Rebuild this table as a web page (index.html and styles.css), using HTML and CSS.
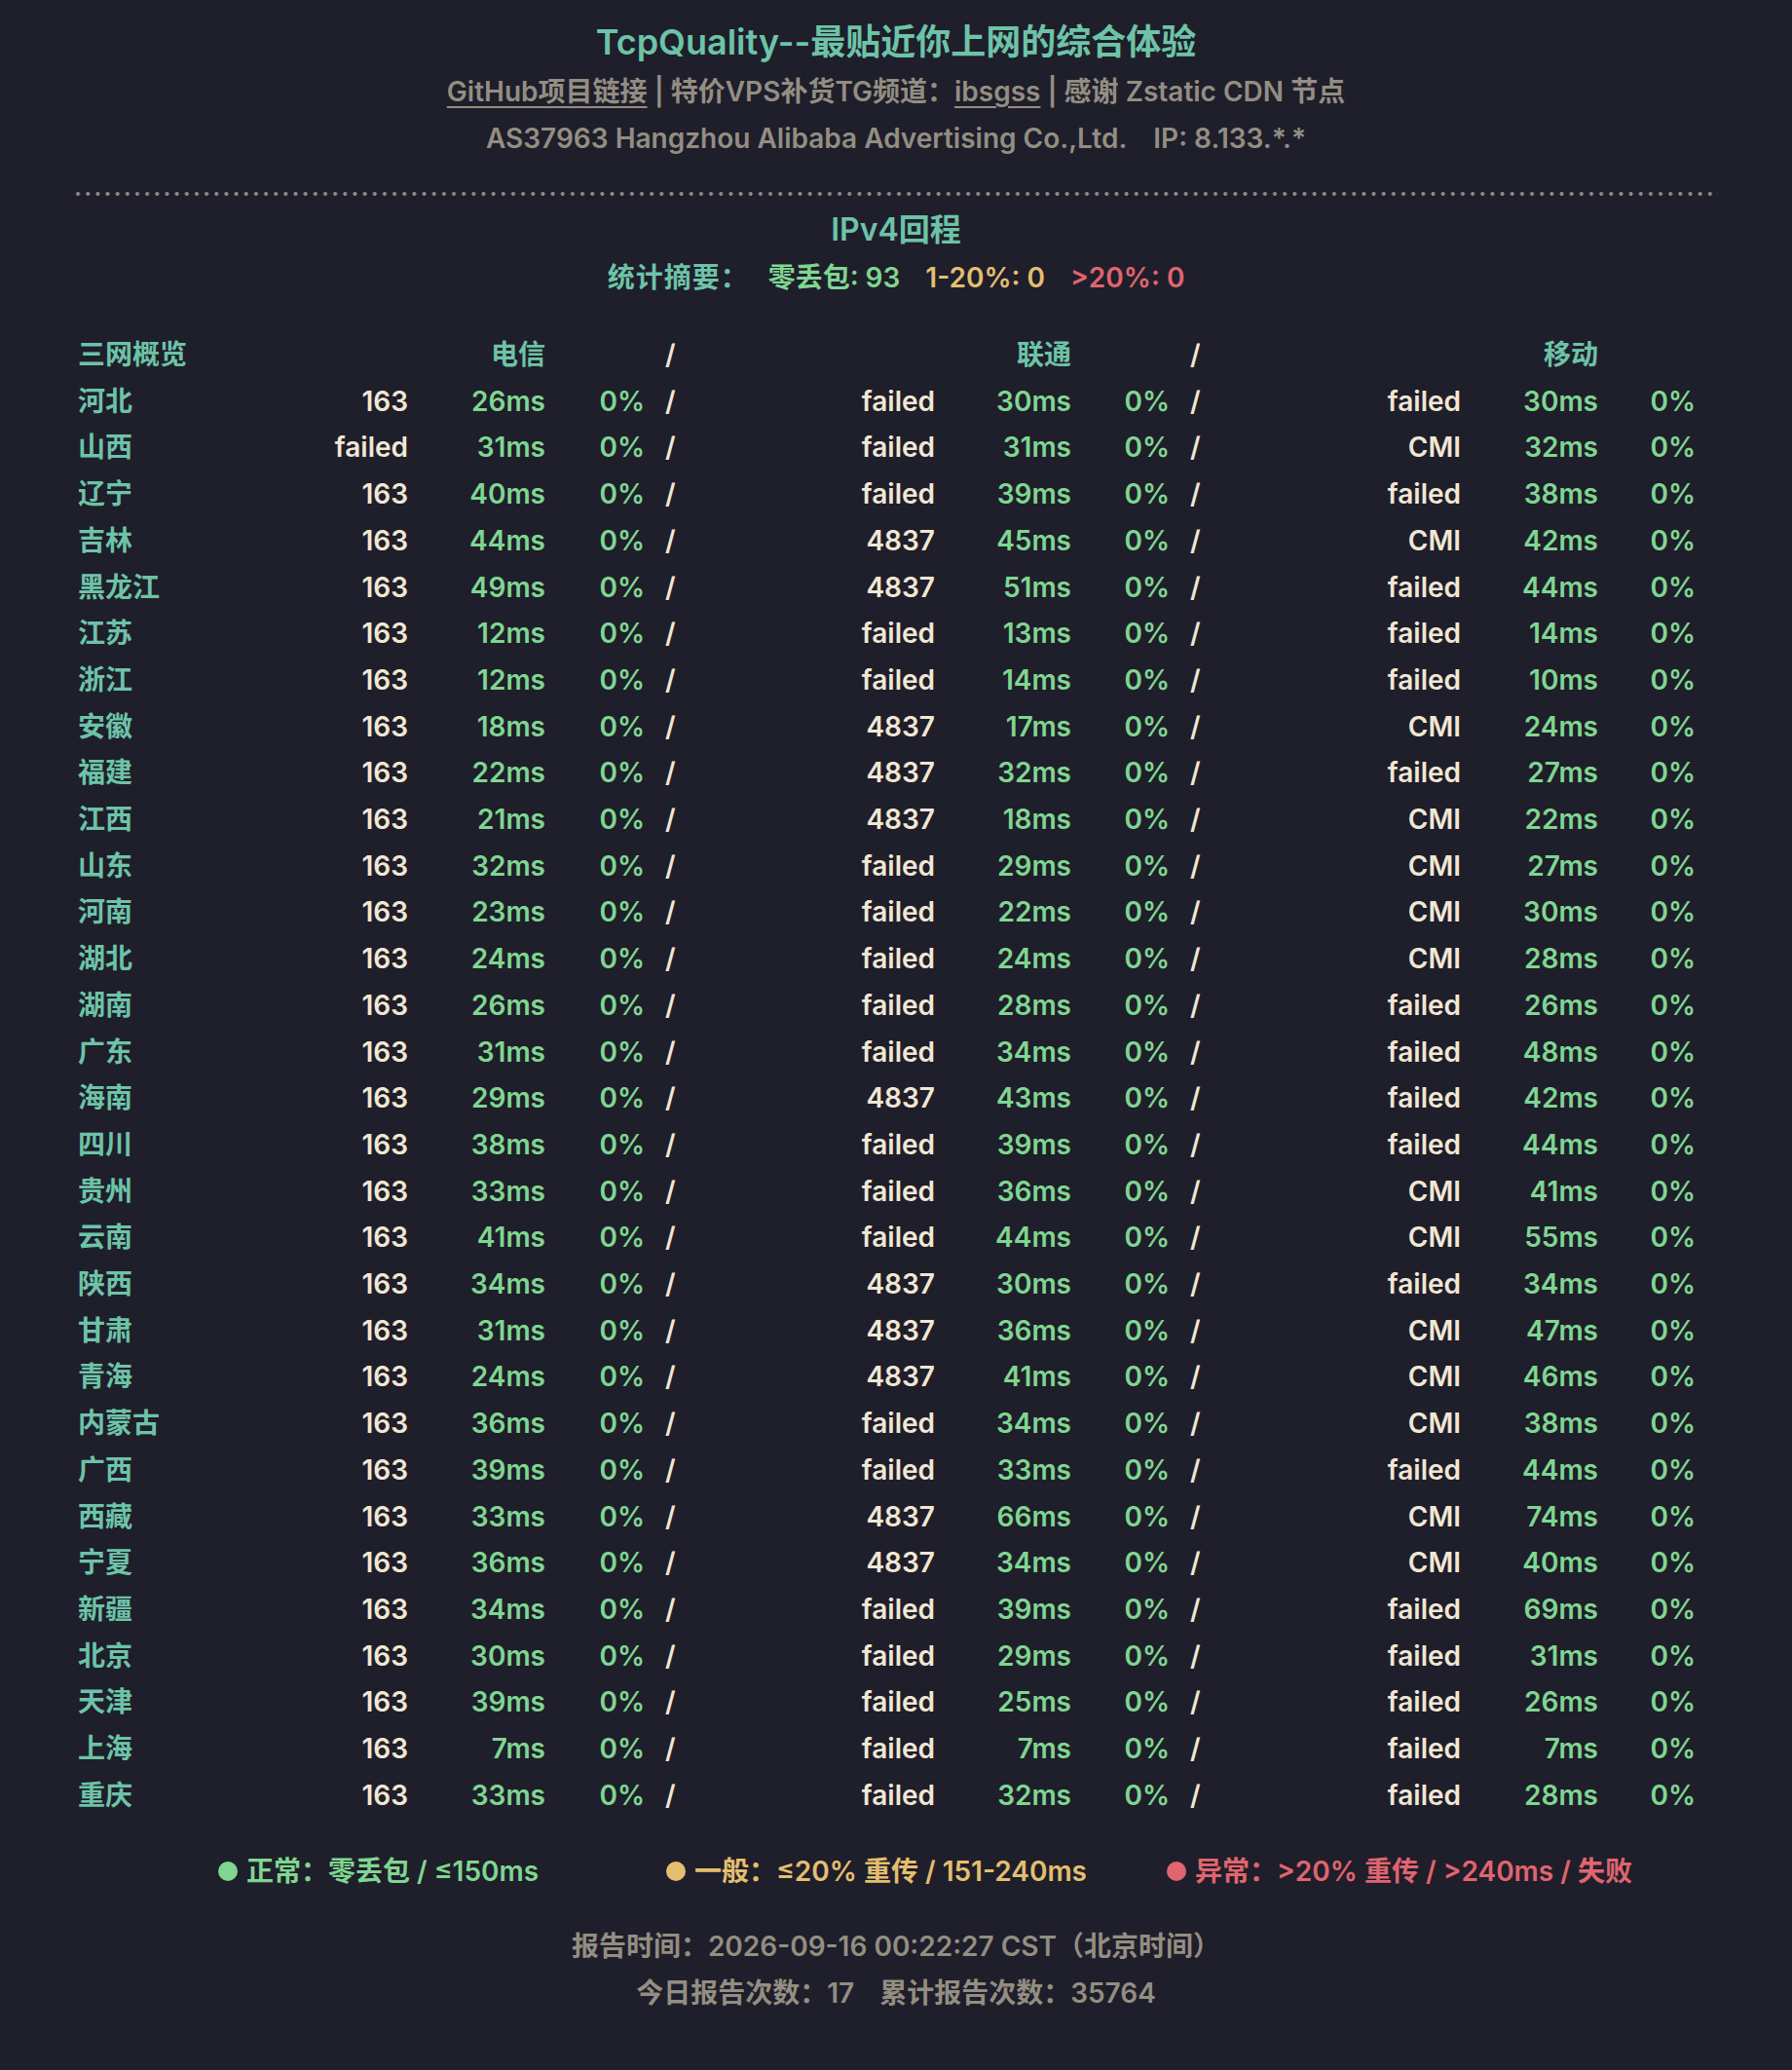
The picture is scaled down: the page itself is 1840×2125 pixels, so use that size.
FILE: index.html
```html
<!DOCTYPE html>
<html lang="zh-CN">
<head>
<meta charset="utf-8">
<title>TcpQuality</title>
<link rel="stylesheet" href="styles.css">
</head>
<body>
<div class="page">
  <header class="head">
    <div class="title">TcpQuality--最贴近你上网的综合体验</div>
    <div class="sub"><a href="#">GitHub项目链接</a> | 特价VPS补货TG频道：<a href="#">ibsgss</a> | 感谢 Zstatic CDN 节点</div>
    <div class="sub">AS37963 Hangzhou Alibaba Advertising Co.,Ltd.<span class="ip">IP: 8.133.*.*</span></div>
  </header>
  <div class="dots"></div>
  <div class="sec">IPv4回程</div>
  <div class="summary">
    <span class="teal">统计摘要：</span>
    <span class="green">零丢包: 93</span>
    <span class="yellow">1-20%: 0</span>
    <span class="red">&gt;20%: 0</span>
  </div>
  <div class="table">
    <div class="row hdr"><span class="n">三网概览</span><span></span><span class="h">电信</span><span></span><span class="s">/</span><span></span><span class="h">联通</span><span></span><span class="s">/</span><span></span><span class="h">移动</span><span></span></div>
    <div class="row"><span class="n">河北</span><span class="a">163</span><span class="g">26ms</span><span class="g">0%</span><span class="s">/</span><span class="a">failed</span><span class="g">30ms</span><span class="g">0%</span><span class="s">/</span><span class="a">failed</span><span class="g">30ms</span><span class="g">0%</span></div>
    <div class="row"><span class="n">山西</span><span class="a">failed</span><span class="g">31ms</span><span class="g">0%</span><span class="s">/</span><span class="a">failed</span><span class="g">31ms</span><span class="g">0%</span><span class="s">/</span><span class="a">CMI</span><span class="g">32ms</span><span class="g">0%</span></div>
    <div class="row"><span class="n">辽宁</span><span class="a">163</span><span class="g">40ms</span><span class="g">0%</span><span class="s">/</span><span class="a">failed</span><span class="g">39ms</span><span class="g">0%</span><span class="s">/</span><span class="a">failed</span><span class="g">38ms</span><span class="g">0%</span></div>
    <div class="row"><span class="n">吉林</span><span class="a">163</span><span class="g">44ms</span><span class="g">0%</span><span class="s">/</span><span class="a">4837</span><span class="g">45ms</span><span class="g">0%</span><span class="s">/</span><span class="a">CMI</span><span class="g">42ms</span><span class="g">0%</span></div>
    <div class="row"><span class="n">黑龙江</span><span class="a">163</span><span class="g">49ms</span><span class="g">0%</span><span class="s">/</span><span class="a">4837</span><span class="g">51ms</span><span class="g">0%</span><span class="s">/</span><span class="a">failed</span><span class="g">44ms</span><span class="g">0%</span></div>
    <div class="row"><span class="n">江苏</span><span class="a">163</span><span class="g">12ms</span><span class="g">0%</span><span class="s">/</span><span class="a">failed</span><span class="g">13ms</span><span class="g">0%</span><span class="s">/</span><span class="a">failed</span><span class="g">14ms</span><span class="g">0%</span></div>
    <div class="row"><span class="n">浙江</span><span class="a">163</span><span class="g">12ms</span><span class="g">0%</span><span class="s">/</span><span class="a">failed</span><span class="g">14ms</span><span class="g">0%</span><span class="s">/</span><span class="a">failed</span><span class="g">10ms</span><span class="g">0%</span></div>
    <div class="row"><span class="n">安徽</span><span class="a">163</span><span class="g">18ms</span><span class="g">0%</span><span class="s">/</span><span class="a">4837</span><span class="g">17ms</span><span class="g">0%</span><span class="s">/</span><span class="a">CMI</span><span class="g">24ms</span><span class="g">0%</span></div>
    <div class="row"><span class="n">福建</span><span class="a">163</span><span class="g">22ms</span><span class="g">0%</span><span class="s">/</span><span class="a">4837</span><span class="g">32ms</span><span class="g">0%</span><span class="s">/</span><span class="a">failed</span><span class="g">27ms</span><span class="g">0%</span></div>
    <div class="row"><span class="n">江西</span><span class="a">163</span><span class="g">21ms</span><span class="g">0%</span><span class="s">/</span><span class="a">4837</span><span class="g">18ms</span><span class="g">0%</span><span class="s">/</span><span class="a">CMI</span><span class="g">22ms</span><span class="g">0%</span></div>
    <div class="row"><span class="n">山东</span><span class="a">163</span><span class="g">32ms</span><span class="g">0%</span><span class="s">/</span><span class="a">failed</span><span class="g">29ms</span><span class="g">0%</span><span class="s">/</span><span class="a">CMI</span><span class="g">27ms</span><span class="g">0%</span></div>
    <div class="row"><span class="n">河南</span><span class="a">163</span><span class="g">23ms</span><span class="g">0%</span><span class="s">/</span><span class="a">failed</span><span class="g">22ms</span><span class="g">0%</span><span class="s">/</span><span class="a">CMI</span><span class="g">30ms</span><span class="g">0%</span></div>
    <div class="row"><span class="n">湖北</span><span class="a">163</span><span class="g">24ms</span><span class="g">0%</span><span class="s">/</span><span class="a">failed</span><span class="g">24ms</span><span class="g">0%</span><span class="s">/</span><span class="a">CMI</span><span class="g">28ms</span><span class="g">0%</span></div>
    <div class="row"><span class="n">湖南</span><span class="a">163</span><span class="g">26ms</span><span class="g">0%</span><span class="s">/</span><span class="a">failed</span><span class="g">28ms</span><span class="g">0%</span><span class="s">/</span><span class="a">failed</span><span class="g">26ms</span><span class="g">0%</span></div>
    <div class="row"><span class="n">广东</span><span class="a">163</span><span class="g">31ms</span><span class="g">0%</span><span class="s">/</span><span class="a">failed</span><span class="g">34ms</span><span class="g">0%</span><span class="s">/</span><span class="a">failed</span><span class="g">48ms</span><span class="g">0%</span></div>
    <div class="row"><span class="n">海南</span><span class="a">163</span><span class="g">29ms</span><span class="g">0%</span><span class="s">/</span><span class="a">4837</span><span class="g">43ms</span><span class="g">0%</span><span class="s">/</span><span class="a">failed</span><span class="g">42ms</span><span class="g">0%</span></div>
    <div class="row"><span class="n">四川</span><span class="a">163</span><span class="g">38ms</span><span class="g">0%</span><span class="s">/</span><span class="a">failed</span><span class="g">39ms</span><span class="g">0%</span><span class="s">/</span><span class="a">failed</span><span class="g">44ms</span><span class="g">0%</span></div>
    <div class="row"><span class="n">贵州</span><span class="a">163</span><span class="g">33ms</span><span class="g">0%</span><span class="s">/</span><span class="a">failed</span><span class="g">36ms</span><span class="g">0%</span><span class="s">/</span><span class="a">CMI</span><span class="g">41ms</span><span class="g">0%</span></div>
    <div class="row"><span class="n">云南</span><span class="a">163</span><span class="g">41ms</span><span class="g">0%</span><span class="s">/</span><span class="a">failed</span><span class="g">44ms</span><span class="g">0%</span><span class="s">/</span><span class="a">CMI</span><span class="g">55ms</span><span class="g">0%</span></div>
    <div class="row"><span class="n">陕西</span><span class="a">163</span><span class="g">34ms</span><span class="g">0%</span><span class="s">/</span><span class="a">4837</span><span class="g">30ms</span><span class="g">0%</span><span class="s">/</span><span class="a">failed</span><span class="g">34ms</span><span class="g">0%</span></div>
    <div class="row"><span class="n">甘肃</span><span class="a">163</span><span class="g">31ms</span><span class="g">0%</span><span class="s">/</span><span class="a">4837</span><span class="g">36ms</span><span class="g">0%</span><span class="s">/</span><span class="a">CMI</span><span class="g">47ms</span><span class="g">0%</span></div>
    <div class="row"><span class="n">青海</span><span class="a">163</span><span class="g">24ms</span><span class="g">0%</span><span class="s">/</span><span class="a">4837</span><span class="g">41ms</span><span class="g">0%</span><span class="s">/</span><span class="a">CMI</span><span class="g">46ms</span><span class="g">0%</span></div>
    <div class="row"><span class="n">内蒙古</span><span class="a">163</span><span class="g">36ms</span><span class="g">0%</span><span class="s">/</span><span class="a">failed</span><span class="g">34ms</span><span class="g">0%</span><span class="s">/</span><span class="a">CMI</span><span class="g">38ms</span><span class="g">0%</span></div>
    <div class="row"><span class="n">广西</span><span class="a">163</span><span class="g">39ms</span><span class="g">0%</span><span class="s">/</span><span class="a">failed</span><span class="g">33ms</span><span class="g">0%</span><span class="s">/</span><span class="a">failed</span><span class="g">44ms</span><span class="g">0%</span></div>
    <div class="row"><span class="n">西藏</span><span class="a">163</span><span class="g">33ms</span><span class="g">0%</span><span class="s">/</span><span class="a">4837</span><span class="g">66ms</span><span class="g">0%</span><span class="s">/</span><span class="a">CMI</span><span class="g">74ms</span><span class="g">0%</span></div>
    <div class="row"><span class="n">宁夏</span><span class="a">163</span><span class="g">36ms</span><span class="g">0%</span><span class="s">/</span><span class="a">4837</span><span class="g">34ms</span><span class="g">0%</span><span class="s">/</span><span class="a">CMI</span><span class="g">40ms</span><span class="g">0%</span></div>
    <div class="row"><span class="n">新疆</span><span class="a">163</span><span class="g">34ms</span><span class="g">0%</span><span class="s">/</span><span class="a">failed</span><span class="g">39ms</span><span class="g">0%</span><span class="s">/</span><span class="a">failed</span><span class="g">69ms</span><span class="g">0%</span></div>
    <div class="row"><span class="n">北京</span><span class="a">163</span><span class="g">30ms</span><span class="g">0%</span><span class="s">/</span><span class="a">failed</span><span class="g">29ms</span><span class="g">0%</span><span class="s">/</span><span class="a">failed</span><span class="g">31ms</span><span class="g">0%</span></div>
    <div class="row"><span class="n">天津</span><span class="a">163</span><span class="g">39ms</span><span class="g">0%</span><span class="s">/</span><span class="a">failed</span><span class="g">25ms</span><span class="g">0%</span><span class="s">/</span><span class="a">failed</span><span class="g">26ms</span><span class="g">0%</span></div>
    <div class="row"><span class="n">上海</span><span class="a">163</span><span class="g">7ms</span><span class="g">0%</span><span class="s">/</span><span class="a">failed</span><span class="g">7ms</span><span class="g">0%</span><span class="s">/</span><span class="a">failed</span><span class="g">7ms</span><span class="g">0%</span></div>
    <div class="row"><span class="n">重庆</span><span class="a">163</span><span class="g">33ms</span><span class="g">0%</span><span class="s">/</span><span class="a">failed</span><span class="g">32ms</span><span class="g">0%</span><span class="s">/</span><span class="a">failed</span><span class="g">28ms</span><span class="g">0%</span></div>
  </div>
  <div class="legend">
    <div class="item green"><span class="dot bg-green"></span>正常：零丢包 / ≤150ms</div>
    <div class="item yellow"><span class="dot bg-yellow"></span>一般：≤20% 重传 / 151-240ms</div>
    <div class="item red"><span class="dot bg-red"></span>异常：&gt;20% 重传 / &gt;240ms / 失败</div>
  </div>
  <footer class="foot">
    <div>报告时间：2026-09-16 00:22:27 CST（北京时间）</div>
    <div>今日报告次数：17<span class="gap">累计报告次数：35764</span></div>
  </footer>
</div>
</body>
</html>
```

FILE: styles.css
```css
html, body {
  margin: 0;
  padding: 0;
  background: #1f1e2b;
}
body {
  font-family: Inter, "Noto Sans CJK SC", sans-serif;
  font-weight: 600;
  color: #f1e7d3;
}
.page {
  width: 1680px;
  margin: 0 auto;
  padding-top: 16px;
  padding-bottom: 40px;
}
.head { text-align: center; }
.title {
  font-size: 36px;
  line-height: 54px;
  color: #6dc3a7;
}
.sub {
  font-size: 28px;
  line-height: 48px;
  color: #938e82;
}
.sub a {
  color: inherit;
  text-decoration: underline;
  text-underline-offset: 5px;
  text-decoration-thickness: 2px;
}
.ip { margin-left: 27px; }
.dots {
  height: 4px;
  margin: 31px -4px 0 -4px;
  background-image: radial-gradient(circle at center, #8e897e 1.7px, transparent 2.3px);
  background-size: 10.16px 4px;
  background-repeat: repeat-x;
  background-position: -1px 0;
}
.sec {
  margin-top: 11px;
  text-align: center;
  font-size: 32px;
  line-height: 48px;
  color: #6dc3a7;
}
.summary {
  margin-top: 1px;
  display: flex;
  justify-content: center;
  gap: 26px;
  font-size: 28px;
  line-height: 48px;
}
.summary .teal { margin-right: -6px; letter-spacing: 1px; }
.teal { color: #6dc3a7; }
.green { color: #7fd690; }
.yellow { color: #e3bf6f; }
.red { color: #e0656f; }
.table { margin-top: 32px; }
.row {
  display: grid;
  grid-template-columns: 221px 118px 141px 102px 146px 152px 140px 101px 146px 153px 141px 100px;
  font-size: 28px;
  line-height: 47.7px;
}
.row > span { text-align: right; white-space: nowrap; }
.row > .n { text-align: left; color: #6dc3a7; }
.row > .h { color: #6dc3a7; }
.row > .s { text-align: left; padding-left: 21px; color: #f1e7d3; }
.row > .a { color: #f1e7d3; }
.row > .g { color: #7fd690; }
.legend {
  margin-top: 29px;
  display: grid;
  grid-template-columns: 460px 514px auto;
  padding-left: 144px;
  font-size: 28px;
  line-height: 48px;
}
.item { display: flex; align-items: center; white-space: nowrap; }
.dot {
  width: 20px;
  height: 20px;
  border-radius: 50%;
  margin-right: 9px;
  flex: none;
}
.bg-green { background: #7fd690; }
.bg-yellow { background: #e3bf6f; }
.bg-red { background: #e0656f; }
.foot {
  margin-top: 29px;
  text-align: center;
  font-size: 28px;
  line-height: 48px;
  color: #938e82;
}
.gap { margin-left: 26px; }
```
